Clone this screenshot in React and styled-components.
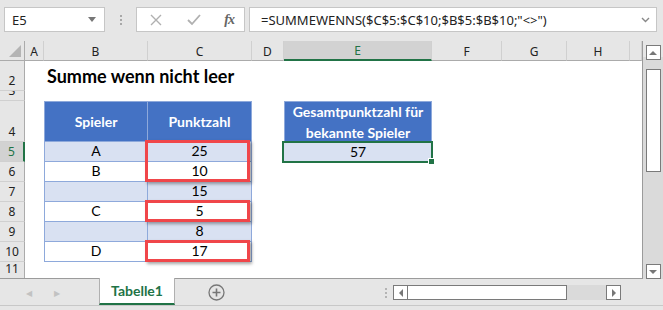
import React from "react";
import styled, { createGlobalStyle } from "styled-components";

const GREEN = "#217346";
const BLUE = "#4472c4";
const BAND = "#d9e1f2";
const LINE = "#8ea9db";
const RED = "#f0464a";

const COLS = [
  { key: "A", w: 19 },
  { key: "B", w: 104 },
  { key: "C", w: 104 },
  { key: "D", w: 32 },
  { key: "E", w: 148 },
  { key: "F", w: 70 },
  { key: "G", w: 65 },
  { key: "H", w: 63 },
  { key: "I", w: 12 },
];

const DATA = [
  { n: 5, name: "A", score: "25", band: true },
  { n: 6, name: "B", score: "10" },
  { n: 7, name: "", score: "15", band: true },
  { n: 8, name: "C", score: "5" },
  { n: 9, name: "", score: "8", band: true },
  { n: 10, name: "D", score: "17" },
];

// red boxes drawn over column C: start row and how many rows
const MARKS = { 5: 2, 8: 1, 10: 1 };

const GlobalStyle = createGlobalStyle`
  html, body { margin: 0; padding: 0; }
  body { background: #e6e6e6; overflow: hidden; }
`;

const Window = styled.div`
  width: 663px;
  height: 310px;
  background: #e6e6e6;
  display: flex;
  flex-direction: column;
  font-family: "Noto Sans", "Open Sans", sans-serif;
  overflow: hidden;
`;

/* ---------- formula bar ---------- */

const FormulaBar = styled.div`
  height: 42px;
  display: flex;
  align-items: flex-start;
  padding: 7px 6px 0 4px;
  box-sizing: border-box;
  gap: 0;
`;

const Box = styled.div`
  height: 25px;
  box-sizing: border-box;
  background: #fff;
  border: 1px solid #c6c6c6;
  display: flex;
  align-items: center;
`;

const NameBox = styled(Box)`
  width: 101px;
  padding: 0 8px 0 7px;
  justify-content: space-between;
  font-size: 13px;
  color: #222;
`;

const Caret = styled.span`
  width: 0;
  height: 0;
  border-left: 4px solid transparent;
  border-right: 4px solid transparent;
  border-top: 5px solid #777;
`;

const Grip = styled.div`
  width: 31px;
  height: 25px;
  display: flex;
  flex-direction: column;
  align-items: center;
  justify-content: center;
  gap: 2px;
  span {
    width: 2px;
    height: 2px;
    background: #a8a8a8;
  }
`;

const FxBox = styled(Box)`
  width: 109px;
  padding: 0 10px 0 12px;
  justify-content: space-between;
  margin-right: 4px;
`;

const Fx = styled.span`
  font-family: "Liberation Serif", serif;
  font-style: italic;
  font-weight: bold;
  font-size: 14px;
  color: #666;
  letter-spacing: -1px;
`;

const FormulaInput = styled(Box)`
  flex: 1;
  padding: 0 6px 0 11px;
  justify-content: space-between;
  font-size: 13px;
  color: #222;
  white-space: nowrap;
`;

/* ---------- sheet ---------- */

const Main = styled.div`
  display: flex;
  height: 238px;
`;

const Sheet = styled.div`
  width: 642px;
  background: #fff;
  border-right: 1px solid #9b9b9b;
  border-bottom: 1px solid #9b9b9b;
  box-sizing: content-box;
  overflow: hidden;
  height: 237px;
`;

const Row = styled.div`
  display: flex;
  height: ${(p) => p.$h}px;
`;

const Corner = styled.div`
  width: 24px;
  height: 19px;
  border-right: 1px solid #ababab;
  border-bottom: 1px solid #ababab;
  background: #e6e6e6;
  position: relative;
  &::after {
    content: "";
    position: absolute;
    right: 3px;
    bottom: 3px;
    border-left: 12px solid transparent;
    border-bottom: 12px solid #b4b4b4;
  }
`;

const ColHead = styled.div`
  width: ${(p) => p.$w}px;
  height: 20px;
  box-sizing: border-box;
  background: ${(p) => (p.$active ? "#d2d2d2" : "#e6e6e6")};
  border-right: 1px solid #d0d0d0;
  border-bottom: ${(p) => (p.$active ? `2px solid ${GREEN}` : "1px solid #ababab")};
  color: ${(p) => (p.$active ? GREEN : "#222")};
  font-size: 12px;
  display: flex;
  align-items: center;
  justify-content: center;
  padding-top: 1px;
  flex-shrink: 0;
`;

const RowHead = styled.div`
  width: 25px;
  flex-shrink: 0;
  box-sizing: border-box;
  background: ${(p) => (p.$active ? "#d2d2d2" : "#e6e6e6")};
  border-right: ${(p) => (p.$active ? `2px solid ${GREEN}` : "1px solid #ababab")};
  border-bottom: 1px solid #d0d0d0;
  color: ${(p) => (p.$active ? GREEN : "#222")};
  font-size: 12px;
  display: flex;
  align-items: flex-end;
  justify-content: center;
  padding-bottom: 1px;
  overflow: hidden;
  line-height: 16px;
`;

const Cell = styled.div`
  position: relative;
  width: ${(p) => p.$w}px;
  flex-shrink: 0;
  box-sizing: border-box;
  background: ${(p) => p.$bg || "transparent"};
  font-family: Lato, "Liberation Sans", sans-serif;
  font-size: 14px;
  color: #000;
  display: flex;
  align-items: flex-end;
  justify-content: center;
  padding-bottom: 2px;
  white-space: nowrap;
  ${(p) =>
    p.$table &&
    `border-right: 1px solid ${LINE}; border-bottom: 1px solid ${LINE};`}
  ${(p) => p.$first && `border-left: 1px solid ${LINE};`}
  ${(p) => p.$top && `border-top: 1px solid ${LINE};`}
`;

const Title = styled(Cell)`
  justify-content: flex-start;
  padding-left: 3px;
  padding-bottom: 4px;
  font-size: 18px;
  font-weight: bold;
  overflow: visible;
  z-index: 1;
`;

const Head = styled(Cell)`
  background: ${BLUE};
  color: #fff;
  font-weight: bold;
  align-items: center;
  text-align: center;
  line-height: 21px;
  white-space: normal;
  padding: 0;
`;

const Mark = styled.div`
  position: absolute;
  left: -3px;
  right: 1px;
  top: -2px;
  height: ${(p) => p.$rows * 20 + 2}px;
  border: 3px solid ${RED};
  box-shadow: 2px 2px 3px rgba(0, 0, 0, 0.35);
  box-sizing: border-box;
  z-index: 2;
  pointer-events: none;
`;

const Selection = styled.div`
  position: absolute;
  left: -2px;
  right: -1px;
  top: -1px;
  bottom: -1px;
  border: 2px solid ${GREEN};
  z-index: 2;
  &::after {
    content: "";
    position: absolute;
    right: -4px;
    bottom: -4px;
    width: 5px;
    height: 5px;
    background: ${GREEN};
    border: 1px solid #fff;
  }
`;

/* ---------- vertical scrollbar ---------- */

const VScroll = styled.div`
  width: 20px;
  display: flex;
  flex-direction: column;
  align-items: center;
  padding-top: 4px;
  box-sizing: border-box;
  background: linear-gradient(#e6e6e6 0 16px, #dadada 16px);
`;

const ArrowBtn = styled.div`
  width: 15px;
  height: 15px;
  box-sizing: border-box;
  background: #fff;
  border: 1px solid #7a7a7a;
  display: flex;
  align-items: center;
  justify-content: center;
  flex-shrink: 0;
`;

const Tri = styled.span`
  width: 0;
  height: 0;
  ${(p) =>
    p.$dir === "up" &&
    "border-left: 4px solid transparent; border-right: 4px solid transparent; border-bottom: 4px solid #777;"}
  ${(p) =>
    p.$dir === "down" &&
    "border-left: 4px solid transparent; border-right: 4px solid transparent; border-top: 4px solid #777;"}
  ${(p) =>
    p.$dir === "left" &&
    "border-top: 4px solid transparent; border-bottom: 4px solid transparent; border-right: 4px solid #777;"}
  ${(p) =>
    p.$dir === "right" &&
    "border-top: 4px solid transparent; border-bottom: 4px solid transparent; border-left: 4px solid #777;"}
`;

const VThumb = styled.div`
  width: 15px;
  height: 103px;
  margin-top: 9px;
  box-sizing: border-box;
  background: #fff;
  border: 1px solid #7a7a7a;
`;

const VFill = styled.div`
  flex: 1;
`;

/* ---------- sheet tabs ---------- */

const TabBar = styled.div`
  height: 26px;
  display: flex;
  align-items: stretch;
`;

const Nav = styled.div`
  width: 99px;
  display: flex;
  align-items: center;
  justify-content: center;
  gap: 22px;
  color: #c2c2c2;
  font-size: 8px;
  padding-right: 14px;
  box-sizing: border-box;
`;

const Tab = styled.div`
  width: 76px;
  box-sizing: border-box;
  background: #fff;
  border-left: 1px solid #b0b0b0;
  border-right: 1px solid #b0b0b0;
  border-bottom: 2px solid ${GREEN};
  color: ${GREEN};
  font-family: Lato, "Liberation Sans", sans-serif;
  font-weight: bold;
  font-size: 14px;
  display: flex;
  align-items: center;
  justify-content: center;
  margin-top: -1px;
`;

const AddSheet = styled.div`
  width: 82px;
  display: flex;
  align-items: center;
  justify-content: center;
`;

const HScrollArea = styled.div`
  flex: 1;
  display: flex;
  align-items: center;
  padding-left: 122px;
  padding-top: 1px;
  box-sizing: border-box;
`;

const HGrip = styled(Grip)`
  width: 14px;
  gap: 2px;
  span {
    background: #b4b4b4;
  }
`;

const HTrack = styled.div`
  display: flex;
  width: 228px;
  height: 15px;
  background: #dadada;
`;

const HThumb = styled.div`
  width: 159px;
  box-sizing: border-box;
  background: #fff;
  border: 1px solid #7a7a7a;
  border-left: none;
`;

const Status = styled.div`
  height: 4px;
  border-top: 1px solid #c8c8c8;
  background: #e6e6e6;
`;

function HeaderRow() {
  return (
    <Row $h={20}>
      <Corner />
      {COLS.map((c) => (
        <ColHead key={c.key} $w={c.w} $active={c.key === "E"}>
          {c.key !== "I" ? c.key : ""}
        </ColHead>
      ))}
    </Row>
  );
}

function Blank({ from }) {
  return COLS.slice(from).map((c) => <Cell key={c.key} $w={c.w} />);
}

export default function App() {
  return (
    <>
      <GlobalStyle />
      <Window>
        <FormulaBar>
          <NameBox>
            E5
            <Caret />
          </NameBox>
          <Grip>
            <span />
            <span />
            <span />
          </Grip>
          <FxBox>
            <svg width="14" height="14" viewBox="0 0 14 14">
              <path d="M2 2 L12 12 M12 2 L2 12" stroke="#b0b0b0" strokeWidth="1.4" />
            </svg>
            <svg width="16" height="14" viewBox="0 0 16 14">
              <path d="M2 7 L6 11 L14 2" stroke="#b0b0b0" strokeWidth="1.8" fill="none" />
            </svg>
            <Fx>fx</Fx>
          </FxBox>
          <FormulaInput>
            =SUMMEWENNS($C$5:$C$10;$B$5:$B$10;"&lt;&gt;")
            <svg width="9" height="6" viewBox="0 0 9 6">
              <path d="M1 1 L4.5 4.5 L8 1" stroke="#888" strokeWidth="1.4" fill="none" />
            </svg>
          </FormulaInput>
        </FormulaBar>

        <Main>
          <Sheet>
            <HeaderRow />
            <Row $h={30}>
              <RowHead>2</RowHead>
              <Cell $w={19} />
              <Title $w={104}>Summe wenn nicht leer</Title>
              <Blank from={2} />
            </Row>
            <Row $h={10}>
              <RowHead>3</RowHead>
              <Blank from={0} />
            </Row>
            <Row $h={41}>
              <RowHead>4</RowHead>
              <Cell $w={19} />
              <Head $w={104} $table $first $top>
                Spieler
              </Head>
              <Head $w={104} $table $top>
                Punktzahl
              </Head>
              <Cell $w={32} />
              <Head $w={148} $table $first $top>
                Gesamtpunktzahl für
                <br />
                bekannte Spieler
              </Head>
              <Blank from={5} />
            </Row>
            {DATA.map((r) => (
              <Row key={r.n} $h={20}>
                <RowHead $active={r.n === 5}>{r.n}</RowHead>
                <Cell $w={19} />
                <Cell $w={104} $table $first $bg={r.band ? BAND : "#fff"}>
                  {r.name}
                </Cell>
                <Cell $w={104} $table $bg={r.band ? BAND : "#fff"}>
                  {r.score}
                  {MARKS[r.n] && <Mark $rows={MARKS[r.n]} />}
                </Cell>
                <Cell $w={32} />
                {r.n === 5 ? (
                  <Cell $w={148} $bg={BAND}>
                    57
                    <Selection />
                  </Cell>
                ) : (
                  <Cell $w={148} />
                )}
                <Blank from={5} />
              </Row>
            ))}
            <Row $h={17}>
              <RowHead>11</RowHead>
              <Blank from={0} />
            </Row>
          </Sheet>
          <VScroll>
            <ArrowBtn>
              <Tri $dir="up" />
            </ArrowBtn>
            <VThumb />
            <VFill />
            <ArrowBtn>
              <Tri $dir="down" />
            </ArrowBtn>
          </VScroll>
        </Main>

        <TabBar>
          <Nav>
            <span>◀</span>
            <span>▶</span>
          </Nav>
          <Tab>Tabelle1</Tab>
          <AddSheet>
            <svg width="17" height="17" viewBox="0 0 17 17">
              <circle cx="8.5" cy="8.5" r="7.5" fill="none" stroke="#777" strokeWidth="1.3" />
              <path d="M8.5 4.5 V12.5 M4.5 8.5 H12.5" stroke="#777" strokeWidth="1.6" />
            </svg>
          </AddSheet>
          <HScrollArea>
            <HGrip>
              <span />
              <span />
              <span />
            </HGrip>
            <HTrack>
              <ArrowBtn>
                <Tri $dir="left" />
              </ArrowBtn>
              <HThumb />
              <VFill />
              <ArrowBtn>
                <Tri $dir="right" />
              </ArrowBtn>
            </HTrack>
          </HScrollArea>
        </TabBar>
        <Status />
      </Window>
    </>
  );
}
